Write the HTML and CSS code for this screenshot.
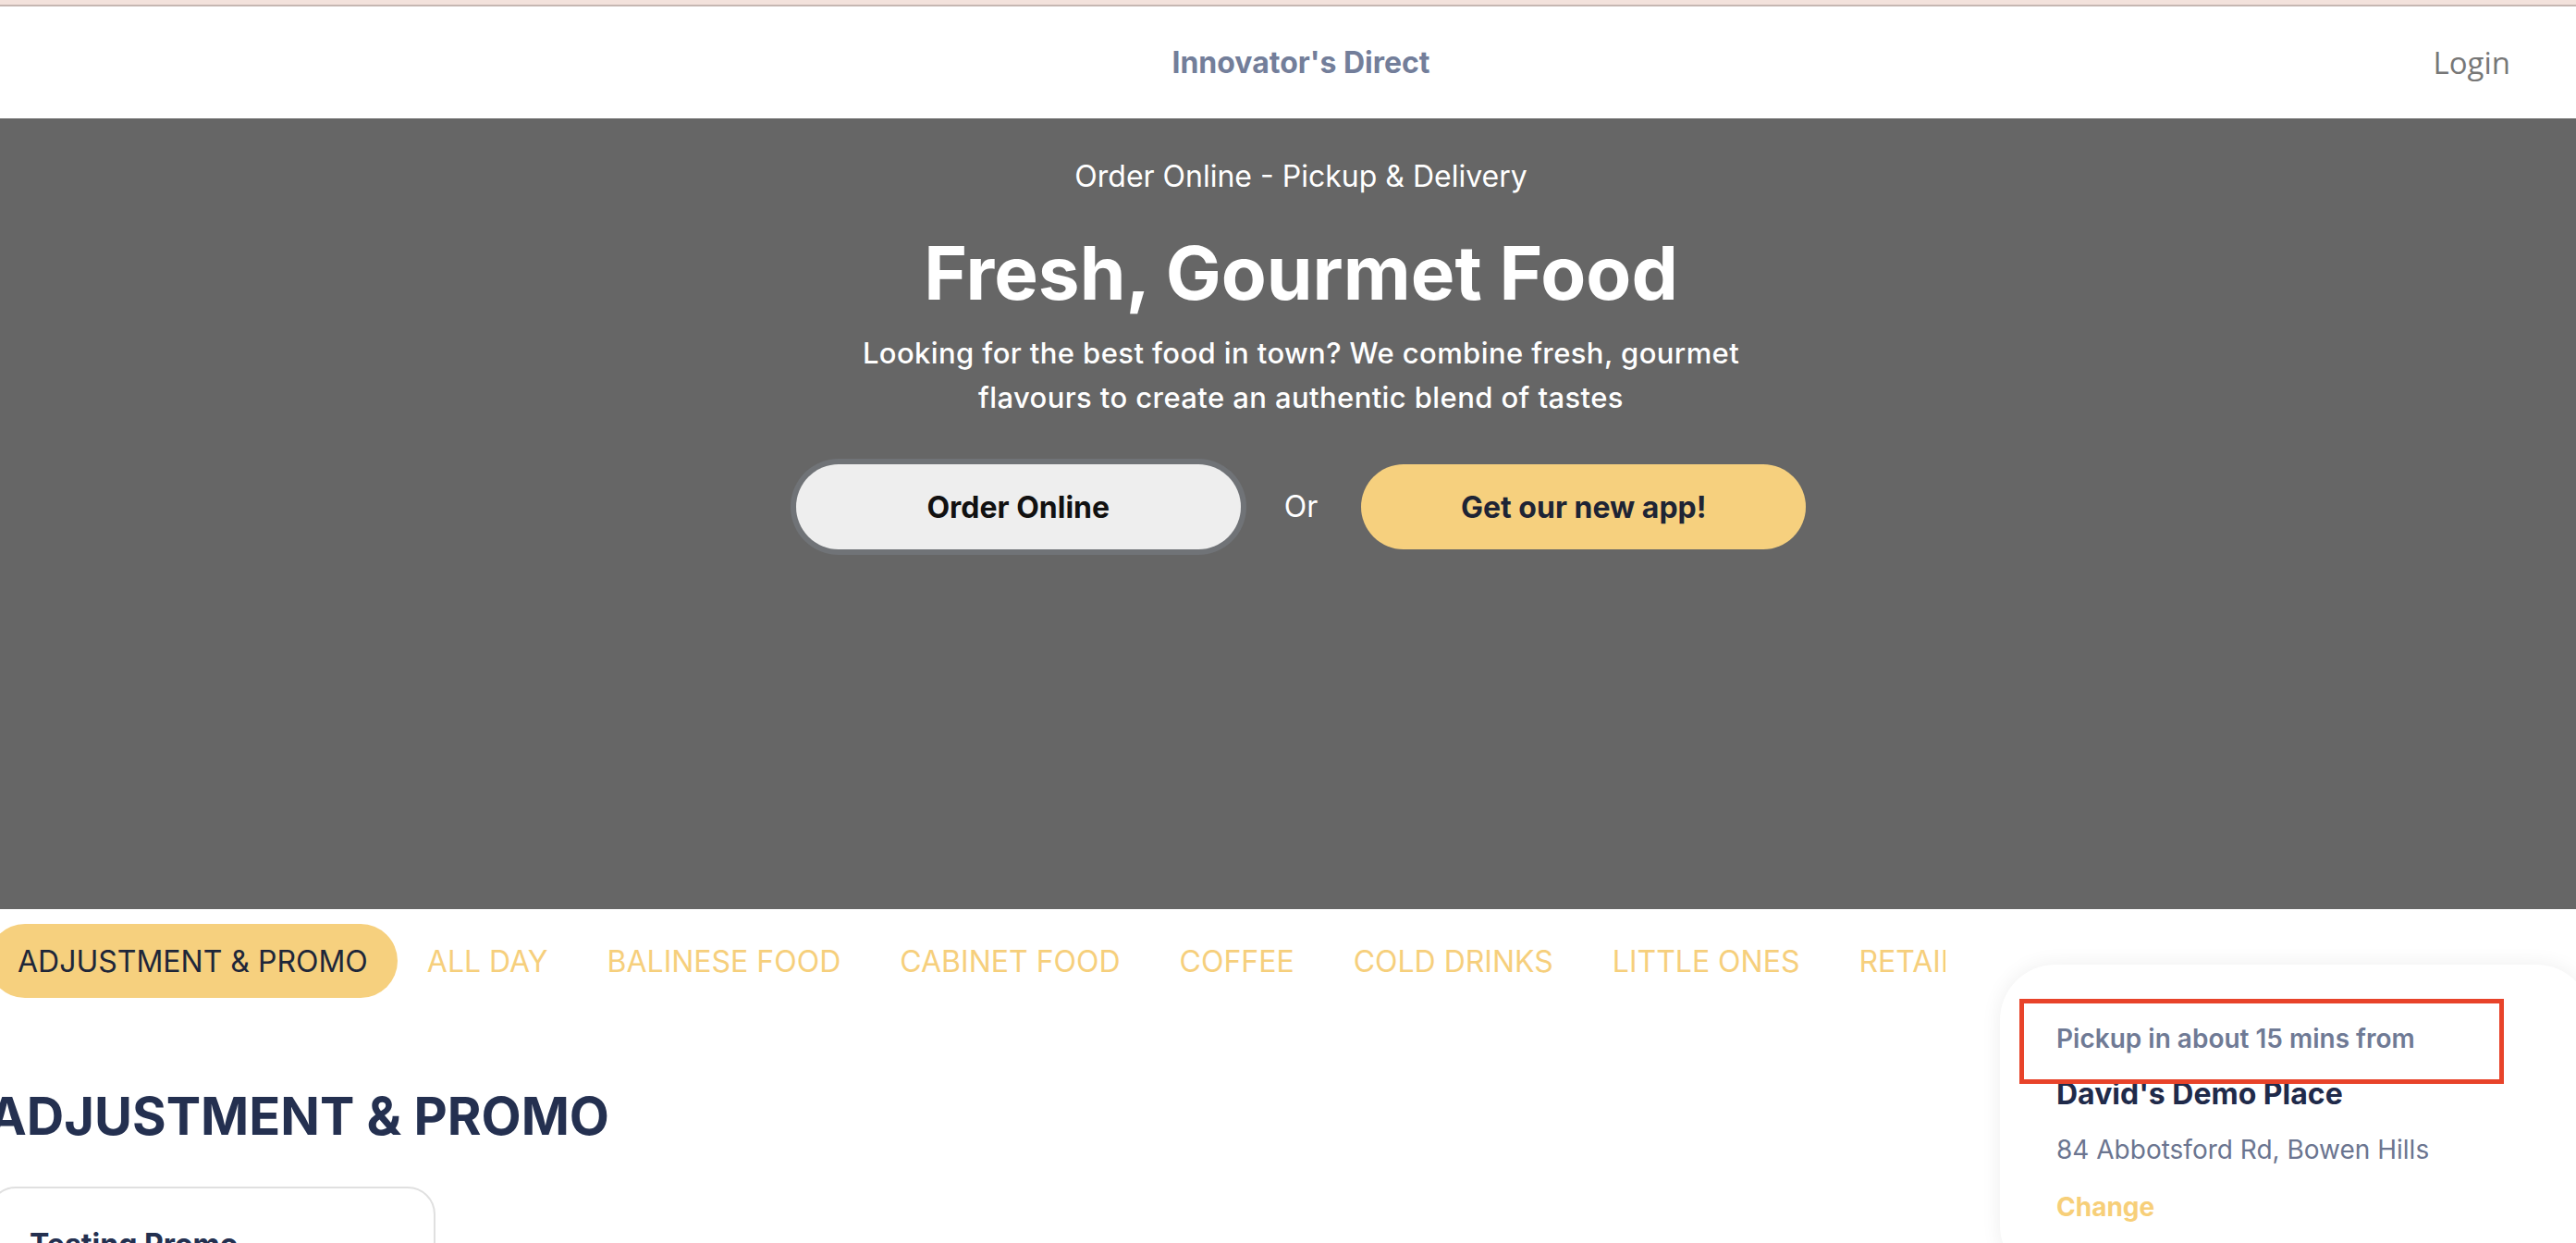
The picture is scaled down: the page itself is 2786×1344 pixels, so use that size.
FILE: index.html
```html
<!DOCTYPE html>
<html lang="en">
<head>
<meta charset="utf-8">
<title>Innovator's Direct</title>
<link rel="stylesheet" href="styles.css">
</head>
<body>
<div class="viewport">
  <div class="page">
    <div class="topstrip"></div>
    <header class="header">
      <div class="brand">Innovator's Direct</div>
      <a class="login" href="#">Login</a>
    </header>
    <section class="hero">
      <p class="hero-sub">Order Online - Pickup &amp; Delivery</p>
      <h1 class="hero-title">Fresh, Gourmet Food</h1>
      <p class="hero-text">Looking for the best food in town? We combine fresh, gourmet flavours to create an authentic blend of tastes</p>
      <div class="hero-actions">
        <button class="btn btn-light">Order Online</button>
        <span class="or">Or</span>
        <button class="btn btn-yellow">Get our new app!</button>
      </div>
    </section>
    <div class="content">
      <main class="menu">
        <nav class="cats">
          <a class="cat active" href="#">ADJUSTMENT &amp; PROMO</a>
          <a class="cat" href="#">ALL DAY</a>
          <a class="cat" href="#">BALINESE FOOD</a>
          <a class="cat" href="#">CABINET FOOD</a>
          <a class="cat" href="#">COFFEE</a>
          <a class="cat" href="#">COLD DRINKS</a>
          <a class="cat" href="#">LITTLE ONES</a>
          <a class="cat" href="#">RETAIL</a>
          <a class="cat" href="#">SNACKS</a>
        </nav>
        <h2 class="section-title">ADJUSTMENT &amp; PROMO</h2>
        <div class="items">
          <div class="item-card">
            <h3 class="item-name">Testing Promo</h3>
          </div>
        </div>
      </main>
      <aside class="sidebar">
        <div class="pickup-card">
          <p class="pickup-eta">Pickup in about 15 mins from</p>
          <p class="pickup-store">David's Demo Place</p>
          <p class="pickup-address">84 Abbotsford Rd, Bowen Hills</p>
          <a class="pickup-change" href="#">Change</a>
          <div class="highlight"></div>
        </div>
      </aside>
    </div>
  </div>
</div>
</body>
</html>
```

FILE: styles.css
```css
html, body {
  margin: 0;
  padding: 0;
  background: #ffffff;
}
body {
  font-family: Inter, "Noto Sans", "Liberation Sans", sans-serif;
  overflow: hidden;
}
.viewport {
  width: 100%;
  overflow: hidden;
}
.page {
  width: 2840px;
  margin-left: -13px;
}
.topstrip {
  height: 5px;
  background: #f3e2dc;
  border-bottom: 2px solid #c6b7b2;
}
.header {
  height: 121px;
  display: flex;
  align-items: center;
  justify-content: center;
  position: relative;
}
.brand {
  font-size: 32px;
  line-height: 36px;
  font-weight: 700;
  color: #737e9a;
}
.login {
  position: absolute;
  right: 112px;
  top: 50%;
  transform: translateY(-50%);
  font-family: "Open Sans", "Noto Sans", sans-serif;
  font-size: 33px;
  line-height: 40px;
  color: #777777;
  text-decoration: none;
}
.hero {
  height: 855px;
  box-sizing: border-box;
  background: #666666;
  padding-top: 45px;
  display: flex;
  flex-direction: column;
  align-items: center;
  color: #ffffff;
  text-align: center;
}
.hero-sub {
  margin: 0;
  font-size: 32px;
  line-height: 36px;
  font-weight: 400;
}
.hero-title {
  margin: 40px 0 0;
  font-size: 80px;
  line-height: 92px;
  font-weight: 700;
}
.hero-text {
  margin: 17px 0 0;
  max-width: 1010px;
  font-size: 31px;
  line-height: 48px;
  font-weight: 500;
  letter-spacing: 0.4px;
}
.hero-actions {
  margin-top: 48px;
  display: flex;
  align-items: center;
  gap: 47px;
}
.btn {
  width: 481px;
  height: 92px;
  border: none;
  border-radius: 46px;
  font-family: Inter, "Noto Sans", sans-serif;
  font-size: 32px;
  font-weight: 700;
  cursor: pointer;
}
.btn-light {
  background: #eeeeee;
  color: #111111;
  box-shadow: 0 0 0 6px #707377;
}
.btn-yellow {
  background: #f6d07e;
  color: #1e2435;
}
.or {
  font-size: 32px;
  line-height: 36px;
  color: #ffffff;
}
.content {
  display: flex;
  gap: 59px;
}
.menu {
  width: 2117px;
  flex: 0 0 2117px;
}
.cats {
  margin-top: 16px;
  display: flex;
  overflow: hidden;
  white-space: nowrap;
}
.cat {
  flex: 0 0 auto;
  height: 80px;
  display: flex;
  align-items: center;
  padding: 0 32px;
  border-radius: 40px;
  font-size: 32px;
  font-weight: 400;
  color: #f6cf7c;
  text-decoration: none;
}
.cat.active {
  background: #f6d07e;
  color: #1e2639;
}
.section-title {
  margin: 94px 0 0;
  font-size: 56px;
  line-height: 68px;
  font-weight: 700;
  color: #243050;
}
.items {
  margin-top: 42px;
  display: flex;
}
.item-card {
  width: 484px;
  height: 300px;
  box-sizing: border-box;
  border: 2px solid #e0e0e0;
  border-radius: 30px;
  padding: 41px 43px;
}
.item-name {
  margin: 0;
  font-size: 32px;
  line-height: 40px;
  font-weight: 700;
  color: #243050;
}
.sidebar {
  flex: 0 0 640px;
}
.pickup-card {
  position: relative;
  margin-top: 60px;
  padding: 60px 61px 60px;
  border-radius: 60px;
  background: #ffffff;
  box-shadow: 0 0 22px rgba(0, 0, 0, 0.07);
}
.pickup-card p {
  margin: 0;
}
.pickup-eta {
  font-size: 28px;
  line-height: 40px;
  font-weight: 600;
  color: #6f7a95;
}
.pickup-store {
  margin-top: 20px !important;
  font-size: 32px;
  line-height: 40px;
  font-weight: 700;
  color: #1f2a4a;
}
.pickup-address {
  margin-top: 20px !important;
  font-size: 28px;
  line-height: 40px;
  color: #6b7590;
}
.pickup-change {
  display: block;
  margin-top: 22px;
  font-size: 28px;
  line-height: 40px;
  font-weight: 700;
  color: #f7cf79;
  text-decoration: none;
}
.highlight {
  position: absolute;
  left: 21px;
  top: 37px;
  width: 524px;
  height: 92px;
  box-sizing: border-box;
  border: 5px solid #e8432a;
}
```
